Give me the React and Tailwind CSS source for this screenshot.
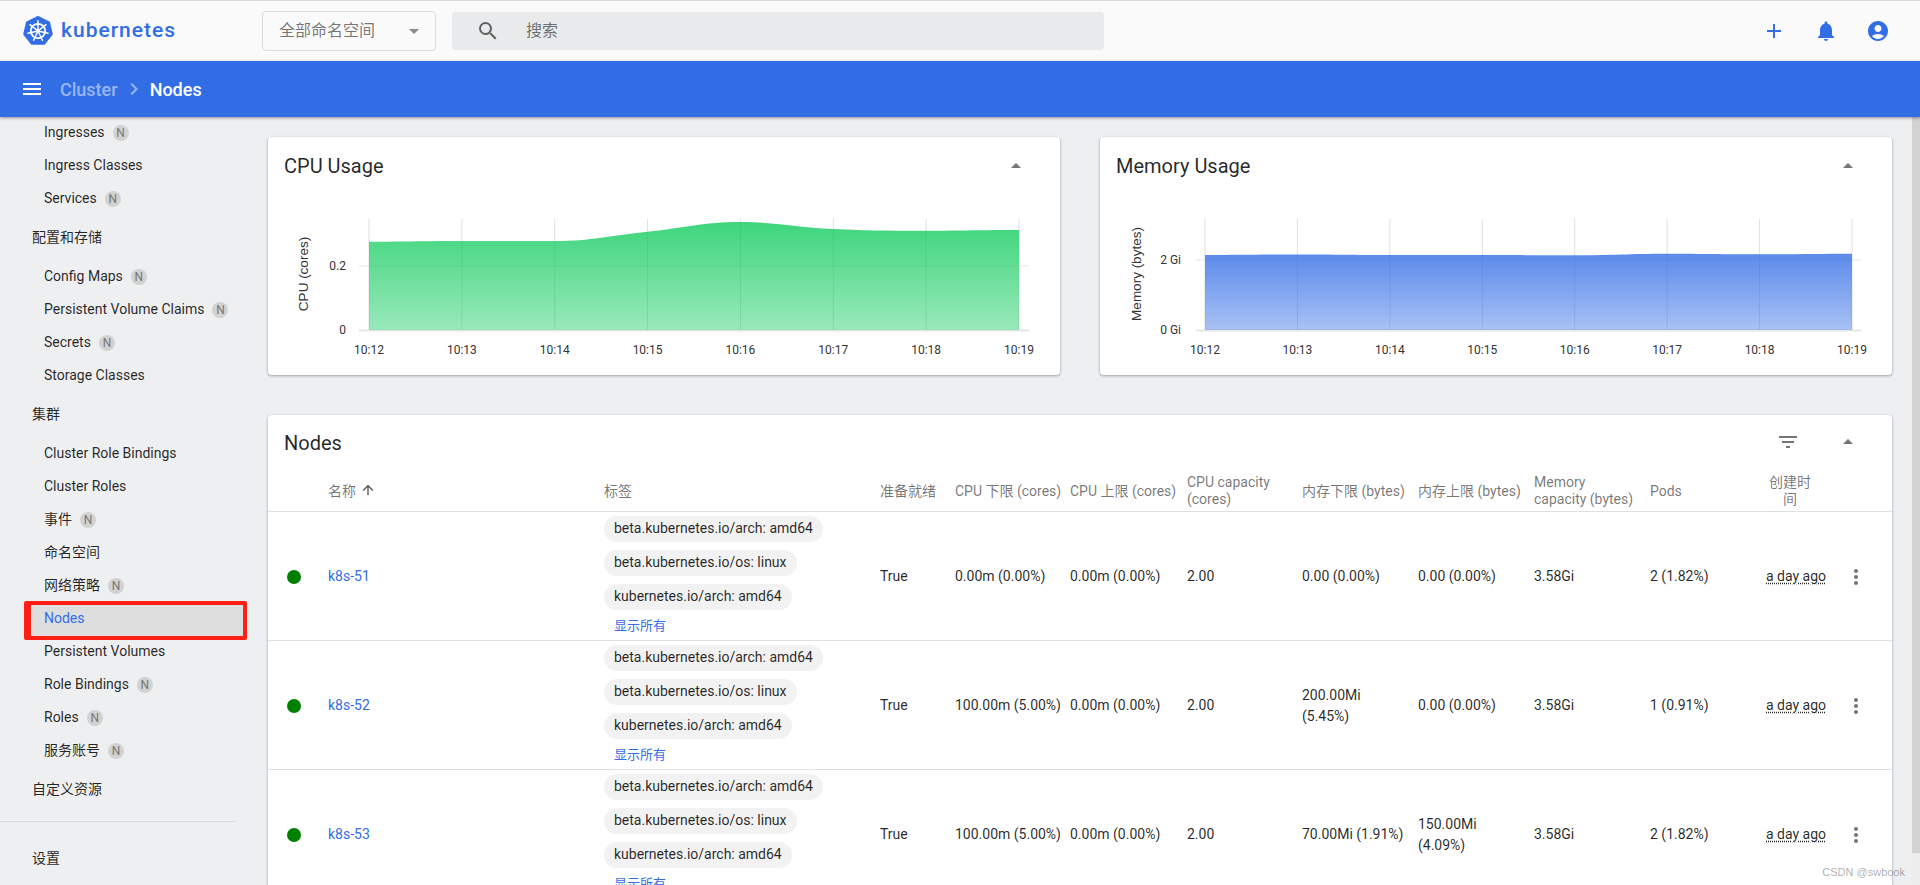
import React from 'react';
import {
  MdAdd, MdNotifications, MdAccountCircle, MdMenu, MdChevronRight, MdFilterList,
  MdMoreVert, MdSearch, MdArrowUpward, MdArrowDropUp, MdArrowDropDown,
} from 'react-icons/md';

const times = ['10:12', '10:13', '10:14', '10:15', '10:16', '10:17', '10:18', '10:19'];

const navTop = [
  { label: 'Ingresses', badge: true },
  { label: 'Ingress Classes' },
  { label: 'Services', badge: true },
  { label: '配置和存储', section: true },
  { label: 'Config Maps', badge: true },
  { label: 'Persistent Volume Claims', badge: true },
  { label: 'Secrets', badge: true },
  { label: 'Storage Classes' },
  { label: '集群', section: true },
  { label: 'Cluster Role Bindings' },
  { label: 'Cluster Roles' },
  { label: '事件', badge: true },
  { label: '命名空间' },
  { label: '网络策略', badge: true },
  { label: 'Nodes', active: true },
  { label: 'Persistent Volumes' },
  { label: 'Role Bindings', badge: true },
  { label: 'Roles', badge: true },
  { label: '服务账号', badge: true },
  { label: '自定义资源', section: true },
];

const nodes = [
  { name: 'k8s-51', cpuReq: '0.00m (0.00%)', cpuLim: '0.00m (0.00%)', memReq: '0.00 (0.00%)', memLim: '0.00 (0.00%)', pods: '2 (1.82%)' },
  { name: 'k8s-52', cpuReq: '100.00m (5.00%)', cpuLim: '0.00m (0.00%)', memReq: '200.00Mi (5.45%)', memLim: '0.00 (0.00%)', pods: '1 (0.91%)' },
  { name: 'k8s-53', cpuReq: '100.00m (5.00%)', cpuLim: '0.00m (0.00%)', memReq: '70.00Mi (1.91%)', memLim: '150.00Mi (4.09%)', pods: '2 (1.82%)' },
];

const chips = ['beta.kubernetes.io/arch: amd64', 'beta.kubernetes.io/os: linux', 'kubernetes.io/arch: amd64'];

const Logo = () => (
  <svg width="30" height="30" viewBox="0 0 30 30" className="shrink-0">
    <path d="M15 1 L26 6.3 L28.8 18.2 L21.1 27.8 L8.9 27.8 L1.2 18.2 L4 6.3 Z" fill="#326de6" stroke="#326de6" strokeWidth="2" strokeLinejoin="round" />
    <circle cx="15" cy="15" r="7.2" fill="none" stroke="#fff" strokeWidth="1.8" />
    <circle cx="15" cy="15" r="1.9" fill="#fff" />
    <g stroke="#fff" strokeWidth="1.5" strokeLinecap="round">
      <path d="M15 15 L15 4.8" />
      <path d="M15 15 L23 8.7" />
      <path d="M15 15 L25 17.3" />
      <path d="M15 15 L19.4 24.2" />
      <path d="M15 15 L10.6 24.2" />
      <path d="M15 15 L5 17.3" />
      <path d="M15 15 L7 8.7" />
    </g>
  </svg>
);

// smooth line through the points, same idea as d3 curveMonotoneX
const curve = (pts) => {
  const slope = pts.map((p, i) => {
    if (i === 0 || i === pts.length - 1) return 0;
    const a = p[1] - pts[i - 1][1];
    const b = pts[i + 1][1] - p[1];
    if (a * b <= 0) return 0;
    return (a + b) / 2 / (p[0] - pts[i - 1][0]);
  });
  let d = `M${pts[0][0]} ${pts[0][1]}`;
  for (let i = 1; i < pts.length; i++) {
    const dx = (pts[i][0] - pts[i - 1][0]) / 2.5;
    d += ` C${pts[i - 1][0] + dx} ${pts[i - 1][1] + slope[i - 1] * dx} ${pts[i][0] - dx} ${pts[i][1] - slope[i] * dx} ${pts[i][0]} ${pts[i][1]}`;
  }
  return d;
};

const Chart = ({ id, left, right, hLeft, hRight, values, midY, midLabel, zeroLabel, labelEnd, axisLabel, axisX, color, topAlpha, bottomAlpha }) => {
  const step = (right - left) / 7;
  const pts = values.map((y, i) => [left + step * i, y]);
  const top = Math.min(...values);
  return (
    <svg width="792" height="178" viewBox="0 0 792 178" className="block">
      <defs>
        <linearGradient id={id} gradientUnits="userSpaceOnUse" x1="0" y1={top} x2="0" y2="133">
          <stop offset="0" stopColor={color} stopOpacity={topAlpha} />
          <stop offset="1" stopColor={color} stopOpacity={bottomAlpha} />
        </linearGradient>
      </defs>
      {times.map((t, i) => (
        <line key={t} x1={left + step * i} x2={left + step * i} y1="22" y2="133" stroke="#e0e0e0" />
      ))}
      <line x1={hLeft} x2={hRight} y1={midY} y2={midY} stroke="#e6e6e6" />
      <line x1={hLeft} x2={hRight} y1="133.5" y2="133.5" stroke="#e6e6e6" strokeWidth="2" />
      <path d={`${curve(pts)} L${right} 133 L${left} 133 Z`} fill={`url(#${id})`} />
      <g className="font-[Roboto,sans-serif] text-[12px]" fill="#333">
        {times.map((t, i) => (
          <text key={t} x={left + step * i} y="157" textAnchor="middle">{t}</text>
        ))}
        <text x={labelEnd} y={midY + 4} textAnchor="end">{midLabel}</text>
        <text x={labelEnd} y="137" textAnchor="end">{zeroLabel}</text>
      </g>
      <text
        transform={`translate(${axisX} 77) rotate(-90)`}
        textAnchor="middle"
        fill="#333"
        className="font-['Liberation_Sans',sans-serif] text-[13.5px]"
      >
        {axisLabel}
      </text>
    </svg>
  );
};

const ChartCard = ({ title, children }) => (
  <div className="h-[238px] bg-white rounded shadow-[0_1px_3px_rgba(0,0,0,0.35)] overflow-hidden">
    <div className="h-[58px] mb-[2px] pl-4 pr-[32px] flex items-center justify-between">
      <span className="text-[20px] text-black/85">{title}</span>
      <MdArrowDropUp className="w-6 h-6 text-[#757575]" />
    </div>
    {children}
  </div>
);

const Th = ({ className = '', children }) => (
  <th className={`pt-[7px] text-left align-middle text-[14px] leading-[17px] font-normal text-black/55 ${className}`}>{children}</th>
);

const Td = ({ className = '', children }) => (
  <td className={`pt-[2px] ${className}`}>{children}</td>
);

const App = () => {
  return (
    <div className="relative h-screen overflow-hidden flex flex-col bg-[#eeeff1] text-[14px] text-black/85 font-[Roboto,'Noto_Sans_CJK_SC',sans-serif]">
      {/* toolbar */}
      <div className="h-[61px] shrink-0 border-t border-[#d8d8d8] bg-[#fafafa] flex items-center">
        <div className="w-[262px] pl-[23px] flex items-center gap-2 shrink-0">
          <Logo />
          <span className="text-[21px] font-medium tracking-[1px] text-[#326de6]">kubernetes</span>
        </div>
        <div className="w-[174px] h-[40px] border border-[#dcdcdc] rounded-sm flex items-center justify-between pl-4 pr-[9px] shrink-0">
          <span className="text-[16px] text-black/55">全部命名空间</span>
          <MdArrowDropDown className="w-6 h-6 text-[#8a8a8a]" />
        </div>
        <div className="ml-4 w-[652px] h-[38px] bg-[#e8eaeb] rounded-sm flex items-center pl-[24px] gap-[26px] shrink-0">
          <MdSearch className="w-6 h-6 text-[#616161]" />
          <span className="text-[16px] text-black/55">搜索</span>
        </div>
        <div className="ml-auto pr-[30px] flex items-center gap-7 text-[#326de6]">
          <MdAdd className="w-6 h-6" />
          <MdNotifications className="w-6 h-6" />
          <MdAccountCircle className="w-6 h-6" />
        </div>
      </div>

      {/* breadcrumb bar */}
      <div className="h-[56px] shrink-0 bg-[#326de6] shadow-[0_1px_3px_rgba(0,0,0,0.4)] z-10 pl-5 flex items-center text-[18px] font-medium text-white">
        <MdMenu className="w-6 h-6" />
        <span className="ml-4 text-white/50">Cluster</span>
        <MdChevronRight className="ml-1 w-6 h-6 text-white/50" />
        <span className="ml-1">Nodes</span>
      </div>

      <div className="flex-1 min-h-0 flex">
        {/* side nav */}
        <div className="w-[236px] shrink-0">
          <div className="-mt-[1px]">
            {navTop.map((item) =>
              item.section ? (
                <div key={item.label} className="h-[45px] pl-8 flex items-center">{item.label}</div>
              ) : (
                <div
                  key={item.label}
                  className={`relative h-[33px] pl-[44px] flex items-center gap-2 ${item.active ? 'text-[#326de6]' : ''}`}
                >
                  {item.active && (
                    <>
                      <div className="absolute left-[32px] w-[212px] top-0 h-[37px] bg-[#dedede]" />
                      <div className="absolute left-[24px] w-[223px] -top-[1px] h-[39px] rounded-[2px] border-[#ff1f14] border-y-4 border-r-4 border-l-[7px]" />
                    </>
                  )}
                  <span className="relative">{item.label}</span>
                  {item.badge && (
                    <span className="w-4 h-4 rounded-full bg-[#d2d2d2] text-[#777] text-[12px] flex items-center justify-center">N</span>
                  )}
                </div>
              ),
            )}
            <div className="mt-[9px] border-t border-[#d9d9d9]" />
            <div className="h-[45px] mt-[14px] pl-8 flex items-center">设置</div>
          </div>
        </div>

        {/* content */}
        <div className="flex-1 min-w-0 pl-8 pt-5 pr-5 overflow-hidden">
          <div className="grid grid-cols-2 gap-10">
            <ChartCard title="CPU Usage">
              <Chart
                id="cpuFill"
                left={101}
                right={751}
                hLeft={91}
                hRight={761}
                values={[44.7, 44, 44, 34.7, 25, 32, 33.7, 33]}
                midY={69}
                midLabel="0.2"
                zeroLabel="0"
                labelEnd={78}
                axisLabel="CPU (cores)"
                axisX={40}
                color="#00c853"
                topAlpha={0.76}
                bottomAlpha={0.4}
              />
            </ChartCard>
            <ChartCard title="Memory Usage">
              <Chart
                id="memFill"
                left={105}
                right={752}
                hLeft={96}
                hRight={761}
                values={[58, 57.5, 58, 58, 58.3, 56.7, 57.3, 56.7]}
                midY={63}
                midLabel="2 Gi"
                zeroLabel="0 Gi"
                labelEnd={81}
                axisLabel="Memory (bytes)"
                axisX={41}
                color="#326de6"
                topAlpha={0.8}
                bottomAlpha={0.42}
              />
            </ChartCard>
          </div>

          <div className="mt-10 bg-white rounded shadow-[0_1px_3px_rgba(0,0,0,0.35)]">
            <div className="h-[50px] pl-4 pr-[32px] pt-[6px] flex items-center justify-between">
              <span className="text-[20px] text-black/85">Nodes</span>
              <div className="flex items-center gap-[36px] -mt-[2px]">
                <MdFilterList className="w-6 h-6 text-[#757575]" />
                <MdArrowDropUp className="w-6 h-6 text-[#757575]" />
              </div>
            </div>
            <table className="w-full table-fixed">
              <thead>
                <tr className="h-[46px] border-b border-[#e0e0e0]">
                  <th className="w-[60px]" />
                  <Th className="w-[276px]">
                    <span className="inline-flex items-center gap-[4px]">名称 <MdArrowUpward className="w-4 h-4 -mt-[3px] text-[#555]" /></span>
                  </Th>
                  <Th className="w-[276px]">标签</Th>
                  <Th className="w-[75px]">准备就绪</Th>
                  <Th className="w-[115px]">CPU 下限 (cores)</Th>
                  <Th className="w-[117px]">CPU 上限 (cores)</Th>
                  <Th className="w-[115px]">CPU capacity (cores)</Th>
                  <Th className="w-[116px]">内存下限 (bytes)</Th>
                  <Th className="w-[116px]">内存上限 (bytes)</Th>
                  <Th className="w-[116px]">Memory<br />capacity (bytes)</Th>
                  <Th className="w-[116px]">Pods</Th>
                  <Th className="w-[70px]"><div className="w-[48px] text-center">创建时间</div></Th>
                  <th />
                </tr>
              </thead>
              <tbody>
                {nodes.map((n) => (
                  <tr key={n.name} className="h-[129px] border-b border-[#e0e0e0]">
                    <Td className="pl-[19px]"><div className="w-[14px] h-[14px] rounded-full bg-[#008000]" /></Td>
                    <Td className="text-[#326de6]">{n.name}</Td>
                    <td className="align-top pt-[4px]">
                      <div className="flex flex-col items-start gap-2">
                        {chips.map((c) => (
                          <span key={c} className="h-[26px] px-[10px] rounded-[13px] bg-[#f2f2f2] flex items-center whitespace-nowrap">{c}</span>
                        ))}
                      </div>
                      <div className="mt-[7px] pl-[10px] text-[13px] leading-[18px] text-[#326de6]">显示所有</div>
                    </td>
                    <Td>True</Td>
                    <Td>{n.cpuReq}</Td>
                    <Td>{n.cpuLim}</Td>
                    <Td>2.00</Td>
                    <Td className="pr-[10px]">{n.memReq}</Td>
                    <Td className="pr-[10px]">{n.memLim}</Td>
                    <Td>3.58Gi</Td>
                    <Td>{n.pods}</Td>
                    <td colSpan="2" className="pt-[2px]">
                      <div className="flex items-center">
                        <span className="underline decoration-dotted underline-offset-2 whitespace-nowrap">a day ago</span>
                        <MdMoreVert className="ml-[18px] w-6 h-6 text-[#757575]" />
                      </div>
                    </td>
                  </tr>
                ))}
              </tbody>
            </table>
          </div>
        </div>

        {/* scrollbar */}
        <div className="w-2 shrink-0 bg-[#ededed]">
          <div className="h-[736px] bg-[#d2d2d2]" />
        </div>
      </div>

      <span className="absolute right-[15px] bottom-[5px] text-[11px] text-black/35 font-['Liberation_Sans',sans-serif]">CSDN @swbook</span>
    </div>
  );
};

export default App;
